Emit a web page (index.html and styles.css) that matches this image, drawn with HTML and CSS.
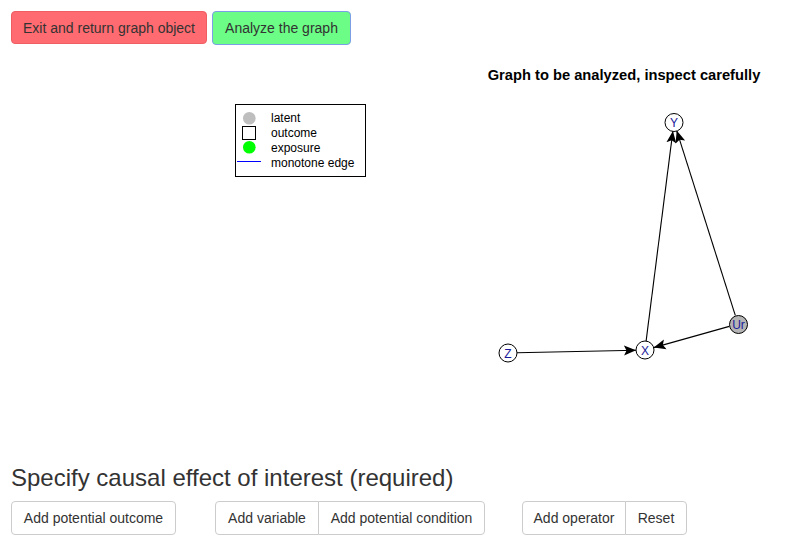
FILE: index.html
```html
<!DOCTYPE html>
<html>
<head>
<meta charset="utf-8">
<link rel="stylesheet" href="styles.css">
</head>
<body>
<div class="top-row">
  <button class="btn btn-exit">Exit and return graph object</button>
  <button class="btn btn-analyze">Analyze the graph</button>
</div>
<div class="plot">
  <svg width="804" height="421" viewBox="0 44 804 421" xmlns="http://www.w3.org/2000/svg">
    <defs>
      <marker id="arr" markerUnits="userSpaceOnUse" markerWidth="14" markerHeight="12" refX="12" refY="6" orient="auto">
        <path d="M0,1 L12,6 L0,11 L2.5,6 Z" fill="#000"/>
      </marker>
    </defs>
    <!-- legend -->
    <rect x="235.5" y="104.5" width="130" height="72" fill="#fff" stroke="#000" stroke-width="1"/>
    <circle cx="249.3" cy="118.3" r="6.3" fill="#bebebe"/>
    <rect x="242.5" y="126.5" width="13" height="13" fill="#fff" stroke="#000"/>
    <circle cx="249.3" cy="147.3" r="6.3" fill="#00ff00"/>
    <line x1="237" y1="161.5" x2="261" y2="161.5" stroke="#0000ff" stroke-width="1"/>
    <g class="legend-text">
      <text x="271" y="122">latent</text>
      <text x="271" y="137">outcome</text>
      <text x="271" y="151.5">exposure</text>
      <text x="271" y="166.5">monotone edge</text>
    </g>
    <!-- title -->
    <text class="plot-title" x="624" y="80" text-anchor="middle">Graph to be analyzed, inspect carefully</text>
    <!-- edges -->
    <g stroke="#000" stroke-width="1.1" fill="none">
      <line x1="517" y1="352.8" x2="636" y2="350.2" marker-end="url(#arr)"/>
      <line x1="729.3" y1="326.4" x2="653.7" y2="347.6" marker-end="url(#arr)"/>
      <line x1="646.1" y1="341.1" x2="672.9" y2="130.9" marker-end="url(#arr)"/>
      <line x1="735.3" y1="315.4" x2="676.7" y2="130.6" marker-end="url(#arr)"/>
    </g>
    <!-- nodes -->
    <g stroke="#000" stroke-width="1">
      <circle cx="674" cy="122.5" r="9" fill="#fff"/>
      <circle cx="645" cy="350" r="9" fill="#fff"/>
      <circle cx="738.5" cy="324.5" r="9" fill="#b4b4b4"/>
      <circle cx="508" cy="353" r="9" fill="#fff"/>
    </g>
    <g class="node-text" text-anchor="middle">
      <text x="674" y="127">Y</text>
      <text x="645" y="354.5">X</text>
      <text x="738.5" y="329">Ur</text>
      <text x="508" y="357.5">Z</text>
    </g>
  </svg>
</div>
<h3 class="section-title">Specify causal effect of interest (required)</h3>
<div class="bottom-row">
  <button class="btn btn-default w-outcome">Add potential outcome</button>
  <div class="btn-group group-a">
    <button class="btn btn-default w-variable">Add variable</button>
    <button class="btn btn-default w-condition">Add potential condition</button>
  </div>
  <div class="btn-group group-b">
    <button class="btn btn-default w-operator">Add operator</button>
    <button class="btn btn-default w-reset">Reset</button>
  </div>
</div>
</body>
</html>
```

FILE: styles.css
```css
html, body {
  margin: 0;
  padding: 0;
  background: #fff;
}
body {
  font-family: "Liberation Sans", Arial, Helvetica, sans-serif;
  font-size: 14px;
  color: #333;
  width: 804px;
  height: 554px;
  overflow: hidden;
}
.top-row {
  display: flex;
  gap: 5px;
  padding: 11px 0 0 11px;
  height: 33px;
}
.btn {
  font-family: "Liberation Sans", Arial, Helvetica, sans-serif;
  font-size: 14px;
  line-height: 20px;
  padding: 6px 0;
  border: 1px solid #ccc;
  border-radius: 4px;
  color: #333;
  background: #fff;
  height: 34px;
  box-sizing: border-box;
  cursor: pointer;
  white-space: nowrap;
  text-align: center;
}
.btn-exit {
  background: #ff6b70;
  border-color: #ef5e63;
  height: 33px;
  width: 196px;
}
.btn-analyze {
  background: #6bfd85;
  border-color: #7b9ee6;
  height: 34px;
  width: 139px;
}
.plot {
  height: 421px;
}
.plot svg {
  display: block;
}
.legend-text text {
  font-family: "Liberation Sans", Arial, sans-serif;
  font-size: 12px;
  fill: #000;
}
.plot-title {
  font-family: "Liberation Sans", Arial, sans-serif;
  font-size: 14.7px;
  font-weight: bold;
  fill: #000;
}
.node-text text {
  font-family: "Liberation Sans", Arial, sans-serif;
  font-size: 12px;
  fill: #1a1a9a;
}
.section-title {
  margin: 0 0 10px 11px;
  font-size: 24px;
  font-weight: 500;
  line-height: 26.4px;
  color: #333;
}
.bottom-row {
  display: flex;
  padding-left: 11px;
}
.w-outcome { width: 165px; }
.w-variable { width: 104px; }
.w-condition { width: 167px; }
.w-operator { width: 104px; }
.w-reset { width: 62px; }
.btn-group {
  display: flex;
}
.group-a {
  margin-left: 39px;
}
.group-b {
  margin-left: 37px;
}
.btn-group .btn:first-child {
  border-top-right-radius: 0;
  border-bottom-right-radius: 0;
}
.btn-group .btn:last-child {
  border-top-left-radius: 0;
  border-bottom-left-radius: 0;
  margin-left: -1px;
}
```
